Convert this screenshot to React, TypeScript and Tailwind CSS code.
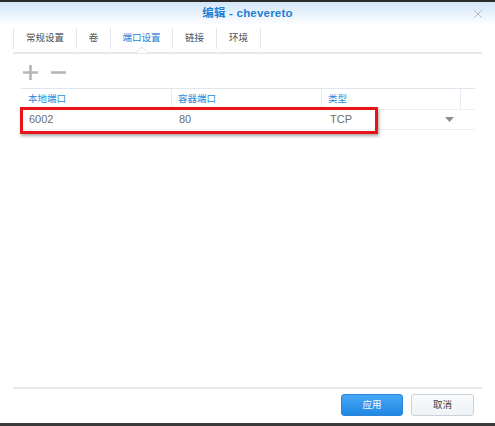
import { X } from "lucide-react";

const tabs = [
  { label: "常规设置", w: "w-[63px]" },
  { label: "卷", w: "w-[34px]" },
  { label: "端口设置", w: "w-[62px]", active: true },
  { label: "链接", w: "w-[44px]" },
  { label: "环境", w: "w-[44px]" },
];

export default function App() {
  return (
    <div
      className="relative w-[495px] h-[426px] bg-white flex flex-col overflow-hidden text-[9.5px]"
      style={{ fontFamily: '"Liberation Sans", "Noto Sans CJK SC", sans-serif' }}
    >
      <div className="h-[2px] bg-[#2b2b2b] shrink-0" />
      {/* title */}
      <div className="relative h-[24px] shrink-0 flex items-center justify-center bg-gradient-to-b from-[#d3e7f8] to-white">
        <span className="text-[11.5px] font-bold text-[#1f7fd4] tracking-[0.2px] -mt-[1px]">编辑 - chevereto</span>
        <X size={14} strokeWidth={1.3} className="absolute right-[10px] top-[5px] text-[#a0a6ad]" />
      </div>

      {/* tabs */}
      <div className="flex h-[21px] px-[13px] mt-[2px] shrink-0">
        {tabs.map((t) => (
          <div
            key={t.label}
            className={`${t.w} flex items-center justify-center border-l border-[#e3e6ea] ${
              t.active ? "text-[#1f7fd4]" : "text-[#4a4f55]"
            }`}
          >
            {t.label}
          </div>
        ))}
        <div className="border-l border-[#e3e6ea]" />
      </div>
      <div className="relative mx-[13px] mt-[3px] h-[2px] bg-[#e6e8ea] shrink-0">
        <svg width="12" height="6" viewBox="0 0 12 6" className="absolute left-[123px] top-[-5px]">
          <path d="M0 6 L6 0 L12 6" fill="white" stroke="#e0e2e4" strokeWidth="1" />
        </svg>
      </div>

      {/* toolbar */}
      <div className="flex items-center gap-[13px] ml-[23px] mt-[10px] h-[16px] shrink-0">
        <svg width="15" height="15" viewBox="0 0 15 15">
          <path d="M7.5 0 V15 M0 7.5 H15" stroke="#b4b6b8" strokeWidth="2.6" />
        </svg>
        <svg width="15" height="15" viewBox="0 0 15 15">
          <path d="M0 7.5 H15" stroke="#b4b6b8" strokeWidth="2.6" />
        </svg>
      </div>

      {/* table */}
      <div className="relative mx-[21px] mt-[8px] w-[454px] border-t border-[#dfe6ee] shrink-0">
        <div className="flex h-[21px] border-b border-[#edf0f3] text-[#2a8ad8]">
          <div className="w-[151px] pl-[7px] flex items-center border-r border-[#e6ebf0]">本地端口</div>
          <div className="w-[150px] pl-[6px] flex items-center border-r border-[#e6ebf0]">容器端口</div>
          <div className="w-[139px] pl-[6px] flex items-center border-r border-[#e6ebf0]">类型</div>
          <div className="flex-1" />
        </div>
        <div className="flex h-[20px] items-center border-b border-[#edf0f3] text-[#6a6e72] text-[11px]">
          <div className="w-[151px] pl-[8px]">6002</div>
          <div className="w-[150px] pl-[7px]">80</div>
          <div className="flex-1 pl-[8px] flex items-center justify-between pr-[21px]">
            <span>TCP</span>
            <svg width="9" height="5" viewBox="0 0 9 5">
              <path d="M0 0 H9 L4.5 5 Z" fill="#8a8e92" />
            </svg>
          </div>
        </div>
        <div className="absolute left-[-1px] top-[18px] w-[358px] h-[27px] border-[3px] border-[#e8141a] shadow-[1px_2px_3px_rgba(0,0,0,0.35)]" />
      </div>

      <div className="flex-1" />

      {/* footer */}
      <div className="mx-[13px] h-[2px] bg-[#e8e9ea] shrink-0" />
      <div className="flex justify-end gap-[8px] pr-[21px] mt-[5px] mb-[7px] shrink-0">
        <button className="w-[62px] h-[22px] rounded-[3px] border border-[#2a84d8] bg-gradient-to-b from-[#45a7f5] to-[#1f87e2] text-white">
          应用
        </button>
        <button className="w-[63px] h-[22px] rounded-[3px] border border-[#c9d1da] bg-gradient-to-b from-[#f9fbfc] to-[#eef2f6] text-[#3c4146]">
          取消
        </button>
      </div>
      <div className="h-[3px] bg-[#3a3a3a] shrink-0" />
    </div>
  );
}
